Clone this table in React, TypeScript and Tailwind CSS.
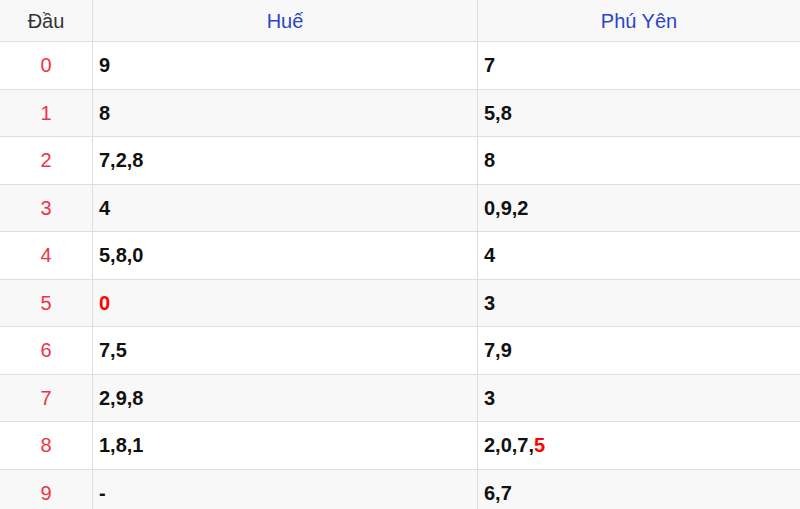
import React from "react";

type Part = { t: string; red?: boolean };
const rows: { d: string; hue: Part[]; py: Part[] }[] = [
  { d: "0", hue: [{ t: "9" }], py: [{ t: "7" }] },
  { d: "1", hue: [{ t: "8" }], py: [{ t: "5,8" }] },
  { d: "2", hue: [{ t: "7,2,8" }], py: [{ t: "8" }] },
  { d: "3", hue: [{ t: "4" }], py: [{ t: "0,9,2" }] },
  { d: "4", hue: [{ t: "5,8,0" }], py: [{ t: "4" }] },
  { d: "5", hue: [{ t: "0", red: true }], py: [{ t: "3" }] },
  { d: "6", hue: [{ t: "7,5" }], py: [{ t: "7,9" }] },
  { d: "7", hue: [{ t: "2,9,8" }], py: [{ t: "3" }] },
  { d: "8", hue: [{ t: "1,8,1" }], py: [{ t: "2,0,7," }, { t: "5", red: true }] },
  { d: "9", hue: [{ t: "-" }], py: [{ t: "6,7" }] },
];

function Val({ parts }: { parts: Part[] }) {
  return (
    <>
      {parts.map((p, i) => (
        <span key={i} className={p.red ? "text-[#ff0000]" : "text-[#111]"}>
          {p.t}
        </span>
      ))}
    </>
  );
}

export default function App() {
  return (
    <div
      className="w-[800px] h-[509px] overflow-hidden bg-white text-[20px]"
      style={{ fontFamily: '"Liberation Sans", Arial, sans-serif' }}
    >
      <div className="grid grid-cols-[92px_385px_1fr]">
        <div className="h-[42px] border-b border-[#dedede] bg-[#f8f8f8] flex items-center justify-center text-[#333]">
          Đầu
        </div>
        <div className="h-[42px] border-b border-l border-[#dedede] bg-[#f8f8f8] flex items-center justify-center text-[#2b45c6]">
          Huế
        </div>
        <div className="h-[42px] border-b border-l border-[#dedede] bg-[#f8f8f8] flex items-center justify-center text-[#2b45c6]">
          Phú Yên
        </div>
        {rows.map((r, i) => {
          const bg = i % 2 === 1 ? "bg-[#f8f8f8]" : "bg-white";
          return (
            <React.Fragment key={r.d}>
              <div className={`h-[47.5px] border-b border-[#dedede] ${bg} flex items-center justify-center text-[#ee3344]`}>
                {r.d}
              </div>
              <div className={`h-[47.5px] border-b border-l border-[#dedede] ${bg} flex items-center pl-[6px] font-bold`}>
                <Val parts={r.hue} />
              </div>
              <div className={`h-[47.5px] border-b border-l border-[#dedede] ${bg} flex items-center pl-[6px] font-bold`}>
                <Val parts={r.py} />
              </div>
            </React.Fragment>
          );
        })}
      </div>
    </div>
  );
}
